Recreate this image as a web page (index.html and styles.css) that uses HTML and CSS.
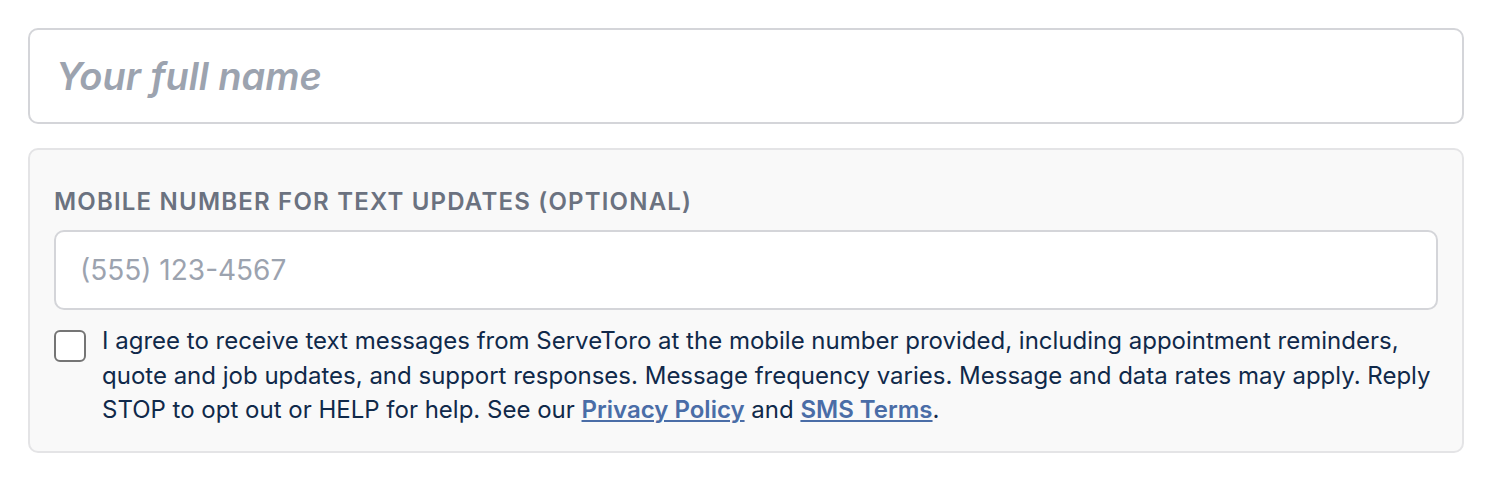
FILE: index.html
```html
<!DOCTYPE html>
<html lang="en">
<head>
    <meta charset="UTF-8">
    <meta name="viewport" content="width=device-width, initial-scale=1.0">
    <title>Contact details</title>
    <link rel="stylesheet" href="styles.css">
</head>
<body>
    <form class="contact-form">
        <input class="name-input" type="text" placeholder="Your full name">

        <div class="sms-box">
            <label class="sms-label" for="phone">Mobile number for text updates (optional)</label>
            <input class="phone-input" id="phone" type="tel" placeholder="(555) 123-4567">
            <label class="consent">
                <input class="consent-check" type="checkbox">
                <span class="consent-text">I agree to receive text messages from ServeToro at the mobile number provided, including appointment reminders, quote and job updates, and support responses. Message frequency varies. Message and data rates may apply. Reply STOP to opt out or HELP for help. See our <a href="#">Privacy Policy</a> and <a href="#">SMS Terms</a>.</span>
            </label>
        </div>
    </form>
</body>
</html>
```

FILE: styles.css
```css
body {
    margin: 0;
    padding: 28px;
    background: #fff;
    font-family: Inter, "Noto Sans", sans-serif;
}
.contact-form {
    display: flex;
    flex-direction: column;
    gap: 24px;
}
.name-input {
    box-sizing: border-box;
    width: 100%;
    height: 96px;
    padding: 0 26px;
    border: 2px solid #d4d5d9;
    border-radius: 10px;
    font-family: inherit;
    font-size: 38px;
    font-style: italic;
    font-weight: 600;
    color: #111827;
    outline: none;
}
.name-input::placeholder {
    color: #9ca3af;
}
.sms-box {
    box-sizing: border-box;
    padding: 38px 24px 23px;
    background: #f9f9f9;
    border: 2px solid #e4e4e6;
    border-radius: 10px;
}
.sms-label {
    display: block;
    font-size: 24px;
    line-height: 28px;
    font-weight: 600;
    letter-spacing: 1.2px;
    text-transform: uppercase;
    color: #6b7280;
    margin-bottom: 14px;
}
.phone-input {
    box-sizing: border-box;
    display: block;
    width: 100%;
    height: 80px;
    padding: 0 24px;
    border: 2px solid #d4d5d9;
    border-radius: 10px;
    background: #fff;
    font-family: inherit;
    font-size: 28px;
    color: #111827;
    outline: none;
}
.phone-input::placeholder {
    color: #9ca3af;
}
.consent {
    display: flex;
    gap: 16px;
    margin-top: 14px;
    align-items: flex-start;
}
.consent-check {
    appearance: none;
    flex: none;
    box-sizing: border-box;
    width: 32px;
    height: 32px;
    margin: 6px 0 0;
    border: 2px solid #757575;
    border-radius: 6px;
    background: #fff;
}
.consent-text {
    font-size: 24px;
    line-height: 34.5px;
    color: #10294a;
}
.consent-text a {
    color: #4a6da7;
    font-weight: 600;
    text-decoration: underline;
    text-decoration-thickness: 2px;
    text-underline-offset: 2px;
}
```
